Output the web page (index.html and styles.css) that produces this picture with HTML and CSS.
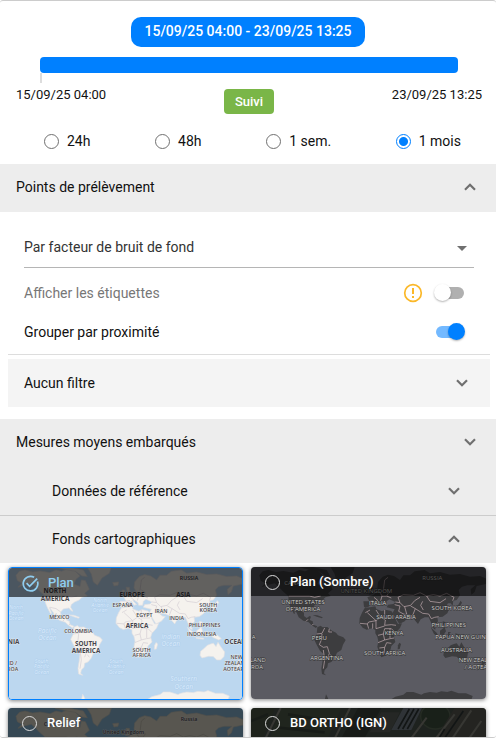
FILE: index.html
```html
<!DOCTYPE html>
<html lang="fr">
<head>
<meta charset="utf-8">
<meta name="viewport" content="width=device-width, initial-scale=1">
<title>Carte</title>
<link rel="stylesheet" href="styles.css">
</head>
<body>
<svg class="defs" aria-hidden="true">
  <defs>
    <symbol id="chevron" viewBox="0 0 12 8"><path d="M1 6.8 6 1.8l5 5" fill="none" stroke="currentColor" stroke-width="2.2"/></symbol>
    <g id="land">
      <path d="M48 46 58 34 75 30 98 36 120 33 150 38 168 30 185 34 200 28 222 30 240 48 228 58 222 72 240 80 244 60 256 62 268 88 254 100 262 108 246 112 238 120 224 126 214 134 212 142 219 154 213 152 207 144 190 147 182 156 182 168 190 174 199 168 203 170 199 180 208 184 210 194 222 199 218 204 205 196 196 187 180 182 166 172 160 158 148 142 155 160 152 162 142 143 136 128 135 108 120 95 106 80 94 70 76 74 54 82 66 70 52 62Z"/>
      <path d="M166 22 210 22 250 30 262 50 246 48 226 34 202 30Z"/>
      <path d="M262 22 334 22 328 40 306 54 292 76 280 66 274 42Z"/>
      <path d="M208 165 222 166 238 172 236 175 220 170Z"/>
      <path d="M222 202 232 197 238 202 252 201 266 212 278 218 284 226 300 232 307 240 299 254 294 270 281 278 274 294 264 306 254 310 252 322 244 330 242 340 248 346 236 342 234 326 238 300 240 282 230 272 220 254 212 238 220 222Z"/>
      <path d="M364 144 380 142 396 139 399 147 416 154 426 149 444 153 449 160 456 178 464 192 476 190 470 204 456 220 452 232 456 246 444 258 442 268 430 286 414 292 408 280 402 260 405 244 402 230 396 220 396 210 386 205 370 209 358 203 348 190 349 174 356 158Z"/>
      <path d="M468 248 473 252 469 267 463 268 464 256Z"/>
      <path d="M362 140 360 124 378 124 372 112 388 106 398 98 408 94 402 84 404 66 418 50 434 44 452 48 470 60 480 46 500 46 514 34 544 30 560 40 590 36 620 44 650 42 680 50 710 48 729 56 729 72 700 78 694 96 684 104 682 88 696 76 672 76 656 80 646 90 650 106 640 120 630 122 628 138 622 130 614 130 610 136 618 146 612 160 598 170 582 172 584 184 578 192 570 186 572 200 578 208 572 208 564 190 556 172 544 172 532 178 524 192 514 180 510 168 496 162 480 160 486 168 496 170 484 184 468 192 458 176 448 158 454 148 430 142 434 134 450 132 456 126 438 118 430 124 428 136 416 136 414 128 402 120 398 122 410 134 402 136 394 124 382 130 376 140 366 143Z"/>
      <path d="M378 82 388 82 390 102 376 104 382 96Z M366 90 374 90 373 100 366 100Z M338 68 356 66 354 76 342 78Z"/>
      <path d="M634 142 644 136 652 122 656 128 648 142 636 148Z M598 184 606 186 608 200 600 196Z"/>
      <path d="M562 202 580 218 586 230 572 222Z M590 212 604 202 608 214 600 226 590 222Z M588 232 612 235 610 238 588 235Z M614 216 624 216 618 220 622 230 614 228Z M636 220 650 224 664 236 656 240 638 232Z"/>
      <path d="M602 274 612 266 622 256 632 252 640 250 648 260 654 247 662 260 674 276 672 290 662 300 650 300 640 290 626 289 606 294 600 286Z"/>
      <path d="M248 403 252 410 256 420 244 420Z M440 420 456 410 480 404 490 396 510 396 534 404 542 400 560 396 580 398 594 394 612 396 624 392 646 400 668 400 688 408 684 420Z"/>
      <path d="M716 300 726 308 712 324 700 332 714 316Z"/>
    </g>
    <g id="borders" fill="none">
      <path d="M136 108H198L214 112 232 108M150 142 168 146 182 156M188 184 194 178M206 196 210 192M220 222 236 220 244 204M236 222 234 240 228 254 240 262 252 260 258 280 254 292M240 270 244 300 240 326M262 284 268 292M258 206 256 216 266 216"/>
      <path d="M366 158 380 150M372 158 398 182 412 172 398 150M424 150V174H450M412 172 426 180 424 196 444 194 458 196M398 182 376 186 372 192 350 190M372 192 376 206M388 190 388 206M398 182 398 206 424 198M404 226 420 222 424 206 444 206 456 218M420 222 424 240 404 248M424 240 440 236 452 234M408 264 424 262 430 248 444 250M424 262 422 280M440 206V234"/>
      <path d="M378 124 390 122M392 112 404 122M408 94 416 108 430 108 436 98 424 90M416 108 412 122M430 108 444 114M420 92 424 60 434 52M456 126 470 128 464 112 480 104 510 106 530 98 550 108 570 104 590 108 610 100 632 112 628 122M550 108 560 124 590 128 608 116M470 128 482 140 502 136 514 122 530 112M454 134 470 138 466 154 484 164M484 140 490 162M502 138 516 146 508 166M516 146 538 160 556 162M556 162 564 176 574 172 586 170M538 124 532 136 540 150"/>
    </g>
  </defs>
</svg>

<main class="panel">
  <section class="period" aria-label="Période">
    <strong class="period-range">15/09/25 04:00 - 23/09/25 13:25</strong>
    <div class="timeline"><div class="timeline-bar"></div><div class="timeline-tick"></div></div>
    <div class="bounds">
      <span>15/09/25 04:00</span>
      <button type="button" class="follow">Suivi</button>
      <span class="bound-end">23/09/25 13:25</span>
    </div>
    <div class="durations">
      <label><input class="radio" type="radio" name="duration">24h</label>
      <label><input class="radio" type="radio" name="duration">48h</label>
      <label><input class="radio" type="radio" name="duration">1 sem.</label>
      <label><input class="radio" type="radio" name="duration" checked>1 mois</label>
    </div>
  </section>

  <button type="button" class="bar" aria-expanded="true">Points de prélèvement<svg class="chevron"><use href="#chevron"/></svg></button>
  <section class="points">
    <div class="select-field">
      <select aria-label="Affichage"><option>Par facteur de bruit de fond</option></select>
      <svg class="caret" viewBox="0 0 10 5"><path d="M0 0h10L5 5z" fill="currentColor"/></svg>
    </div>
    <div class="option option-disabled">
      <label for="tags">Afficher les étiquettes</label>
      <svg class="warning" viewBox="0 0 20 20"><circle cx="10" cy="10" r="8.3" fill="none" stroke="currentColor" stroke-width="1.7"/><path d="M10 5v6M10 13v2" stroke="currentColor" stroke-width="2"/></svg>
      <input class="switch" id="tags" type="checkbox" role="switch" disabled>
    </div>
    <div class="option">
      <label for="group">Grouper par proximité</label>
      <input class="switch" id="group" type="checkbox" role="switch" checked>
    </div>
  </section>
  <section class="filters">
    <button type="button" class="bar bar-light" aria-expanded="false">Aucun filtre<svg class="chevron"><use href="#chevron"/></svg></button>
  </section>
  <button type="button" class="bar" aria-expanded="false">Mesures moyens embarqués<svg class="chevron"><use href="#chevron"/></svg></button>
  <button type="button" class="bar bar-nested" aria-expanded="false">Données de référence<svg class="chevron"><use href="#chevron"/></svg></button>
  <button type="button" class="bar bar-nested bar-last" aria-expanded="true">Fonds cartographiques<svg class="chevron"><use href="#chevron"/></svg></button>

  <section class="maps">
    <label class="card card-selected">
      <svg class="art" viewBox="27 24 699 393" preserveAspectRatio="xMidYMid slice" aria-hidden="true">
        <rect x="0" y="0" width="760" height="440" fill="#bcd7ef"/>
        <use href="#land" fill="#f5f2ee" stroke="#e3e1e2" stroke-width="2"/>
        <use href="#borders" stroke="#d3cdd3" stroke-width="2"/>
        <g class="ocean">
          <text x="48" y="148">North</text><text x="48" y="165">Pacific</text><text x="48" y="181">Ocean</text>
          <text x="300" y="125">North</text><text x="300" y="141">Atlantic</text><text x="300" y="157">Ocean</text>
          <text x="125" y="308">South</text><text x="125" y="325">Pacific</text><text x="125" y="341">Ocean</text>
          <text x="348" y="308">South</text><text x="348" y="325">Atlantic</text><text x="348" y="341">Ocean</text>
        </g>
        <g class="ocean ocean-big">
          <text x="142" y="218">Pacific</text><text x="142" y="241">Ocean</text>
          <text x="512" y="236">Indian</text><text x="512" y="258">Ocean</text>
          <text x="551" y="362">Southern</text><text x="551" y="386">Ocean</text>
        </g>
        <g class="place">
          <text x="567" y="60">RUSSIA</text><text x="368" y="142">ESPAÑA</text><text x="433" y="172">EGYPT</text><text x="483" y="158">IRAN</text><text x="530" y="181">INDIA</text>
          <text x="625" y="140">SOUTH</text><text x="625" y="157">KOREA</text><text x="614" y="200">PHILIPPINES</text><text x="605" y="229">INDONESIA</text>
          <text x="178" y="178">MÉXICO</text><text x="235" y="218">COLOMBIA</text><text x="425" y="275">SOUTH</text><text x="425" y="291">AFRICA</text>
          <text x="710" y="296">NEW</text><text x="710" y="314">ZEALAND</text><text x="712" y="332">AOTEAROA</text><text x="34" y="314">ND /</text><text x="38" y="332">ROA</text>
        </g>
        <g class="place place-big">
          <text x="165" y="100">NORTH</text><text x="165" y="123">AMERICA</text><text x="396" y="111">EUROPE</text><text x="550" y="111">ASIA</text><text x="411" y="205">AFRICA</text>
          <text x="258" y="257">SOUTH</text><text x="258" y="280">AMERICA</text><text x="41" y="252">NIA</text><text x="716" y="252">OCEANIA</text>
        </g>
      </svg>
      <span class="card-head"><input class="radio" type="radio" name="map" checked><svg class="tick" viewBox="0 0 17 17"><path d="M15.5 6.5a7.3 7.3 0 1 1-3.4-4.2M4.6 8.2l3 3.1 7.6-7.7" fill="none" stroke="currentColor" stroke-width="1.7"/></svg><span class="card-name">Plan</span></span>
    </label>

    <label class="card">
      <svg class="art" viewBox="9 21 705 396" preserveAspectRatio="xMidYMid slice" aria-hidden="true">
        <rect x="0" y="0" width="760" height="440" fill="#5b5b62"/>
        <g transform="translate(-14 0)"><use href="#land" fill="#3d3d3f"/><use href="#borders" stroke="#c4aeb2" stroke-width="2"/></g>
        <g class="place place-dark">
          <text x="145" y="76">CANADA</text><text x="553" y="60">RUSSIA</text><text x="355" y="99">UNITED KINGDOM</text><text x="165" y="131">UNITED STATES</text><text x="165" y="152">OF AMERICA</text>
          <text x="389" y="135">ITALIA</text><text x="444" y="176">SAUDI ARABIA</text><text x="612" y="150">SOUTH KOREA</text><text x="602" y="202">PHILIPPINES</text>
          <text x="438" y="225">KENYA</text><text x="214" y="240">PERU</text><text x="236" y="300">ARGENTINA</text><text x="410" y="286">SOUTH AFRICA</text>
          <text x="648" y="238">PAPUA NEW GUINEA</text><text x="625" y="277">AUSTRALIA</text><text x="694" y="306">NEW ZEALAND</text><text x="702" y="326">/ AOTEAROA</text>
          <text x="17" y="238">A</text><text x="30" y="306">LAND</text><text x="27" y="326">ROA</text>
        </g>
      </svg>
      <span class="card-head"><input class="radio" type="radio" name="map"><span class="card-name">Plan (Sombre)</span></span>
    </label>

    <label class="card">
      <svg class="art" viewBox="24 21 705 396" preserveAspectRatio="xMidYMid slice" aria-hidden="true">
        <rect x="0" y="0" width="760" height="440" fill="#87b3d2"/>
        <use href="#land" fill="#dcd8c8" stroke="#c5c4ba" stroke-width="2"/>
        <use href="#borders" stroke="#b5b0a4" stroke-width="2"/>
        <g class="place"><text x="567" y="60">Russia</text><text x="370" y="99">United Kingdom</text><text x="160" y="75">Canada</text></g>
      </svg>
      <span class="card-head"><input class="radio" type="radio" name="map"><span class="card-name">Relief</span></span>
    </label>

    <label class="card">
      <svg class="art" viewBox="9 21 705 396" preserveAspectRatio="xMidYMid slice" aria-hidden="true">
        <rect x="0" y="0" width="760" height="440" fill="#4d564e"/>
        <path d="M0 21h80L46 110H0z" fill="#4c5545"/><path d="M100 21h180l-40 90H66z" fill="#515c4c"/>
        <path d="M330 21h70l-50 90h-70z" fill="#3c453e"/><path d="M400 34h55l-30 60h-60z" fill="#5d625e"/><path d="M466 21h56l-32 66h-60z" fill="#77808a"/>
        <ellipse cx="562" cy="46" rx="44" ry="38" fill="#405040" stroke="#5c6c58" stroke-width="4"/>
        <path d="M620 21h94v96H560z" fill="#5a5b54"/>
        <path d="M98 21 50 117M306 21l-48 96M536 50l-50 67M620 40l-60 77M670 28l-60 89M700 60l-40 57" fill="none" stroke="#8a8a80" stroke-width="6"/>
        <path d="M484 24l-34 60M498 24l-34 60M512 24l-34 60M646 30l-60 87M590 84l-20 33" fill="none" stroke="#2e3636" stroke-width="5"/>
        <path d="M9 60 60 40M120 40l130 20M90 80l140 14" stroke="#3e483c" stroke-width="8"/>
      </svg>
      <span class="card-head"><input class="radio" type="radio" name="map"><span class="card-name">BD ORTHO (IGN)</span></span>
    </label>
  </section>
</main>
</body>
</html>
```
FILE: styles.css
```css
* { box-sizing: border-box; }

body {
  margin: 0;
  background: #fff;
  color: #111;
  font: 14px/20px Roboto, "Liberation Sans", sans-serif;
}

button, select { font: inherit; color: inherit; }
input { margin: 0; flex: none; }
.defs { position: absolute; width: 0; height: 0; }

.panel {
  display: flex;
  flex-direction: column;
  height: 100vh;
  overflow: hidden;
  border: solid #ccc;
  border-width: 1px 0;
  border-radius: 3px;
}
.panel > * { flex: none; }

/* Period */
.period { display: flex; flex-direction: column; padding-top: 16px; }
.period-range {
  align-self: center;
  padding: 4px 13px 6px;
  border-radius: 10px;
  background: #0080ff;
  color: #fff;
  font-weight: 500;
}
.timeline { margin: 10px 38px 0 40px; }
.timeline-bar { height: 16px; border-radius: 4px; background: #0080ff; }
.timeline-tick { width: 2px; height: 10px; background: #ddd; }
.bounds {
  display: grid;
  grid-template-columns: 1fr auto 1fr;
  align-items: start;
  padding: 2px 14px 0 16px;
  font-size: 13px;
}
.bound-end { text-align: right; }
.follow {
  margin-top: 4px;
  padding: 3px 11px 2px;
  border: 0;
  border-radius: 4px;
  background: #7ab648;
  color: #fff;
  font-weight: 500;
}
.durations { display: flex; justify-content: space-between; padding: 17px 35px 13px 44px; }
.durations label { display: flex; align-items: center; gap: 8px; }

.radio {
  appearance: none;
  width: 15px;
  height: 15px;
  border: 1px solid #707070;
  border-radius: 50%;
}
.radio:checked {
  border-color: #0080ff;
  background: radial-gradient(#0080ff 4px, transparent 5px);
}

/* Accordion bars */
.bar {
  display: flex;
  align-items: center;
  justify-content: space-between;
  width: 100%;
  height: 48px;
  padding: 0 20px 2px 16px;
  border: 0;
  background: #ededed;
  text-align: left;
}
.bar-nested { padding: 0 36px 0 52px; }
.bar-last { padding-bottom: 2px; border-top: 1px solid #ccc; }
.chevron { width: 12px; height: 8px; color: #707070; }
[aria-expanded="false"] .chevron { transform: scaleY(-1); }

/* Points */
.points { padding: 16px 16px 0 24px; }
.select-field { position: relative; margin-right: 6px; }
.select-field select {
  display: block;
  width: 100%;
  height: 40px;
  padding: 0 0 2px;
  border: 0;
  border-bottom: 1px solid #b5b5b5;
  background: transparent;
  appearance: none;
  color: #333;
}
.caret { position: absolute; right: 7px; top: 18px; width: 10px; height: 5px; color: #707070; }
.option { display: flex; align-items: center; height: 39px; padding-right: 16px; }
.option:nth-child(2) { margin-top: 5px; }
.option label { flex: 1; }
.option-disabled label { color: #777; }
.warning { width: 20px; height: 20px; margin-right: 13px; color: #fbb829; }
.switch {
  appearance: none;
  display: flex;
  align-items: center;
  width: 28px;
  height: 12px;
  border-radius: 6px;
  background: #b0b0b0;
}
.switch::before {
  content: "";
  width: 17px;
  height: 17px;
  flex: none;
  margin-left: -2px;
  border-radius: 50%;
  background: #fff;
  box-shadow: 0 1px 2px rgba(0, 0, 0, .3);
}
.switch:checked { background: #73b9ff; justify-content: flex-end; }
.switch:checked::before { background: #0080ff; margin-right: -1px; }

.filters { margin: 3px 6px 12px 8px; padding-top: 4px; border-top: 1px solid #ddd; }
.bar-light { padding: 0 22px 0 16px; background: #f4f4f4; }

/* Base maps */
.maps {
  display: grid;
  grid-template-columns: 1fr 1fr;
  gap: 8px;
  align-items: start;
  padding: 4px 10px 8px 8px;
}
.card {
  display: block;
  position: relative;
  overflow: hidden;
  border-radius: 4px;
  box-shadow: 0 1px 4px rgba(0, 0, 0, .5);
}
.card-selected { border: 1px solid #0080ff; }
.art { display: block; width: 100%; aspect-ratio: 235 / 132; }
.card-head {
  position: absolute;
  top: 0;
  left: 0;
  right: 0;
  display: flex;
  align-items: center;
  gap: 10px;
  height: 29px;
  padding: 2px 14px 0;
  background: rgba(0, 0, 0, .6);
  color: #fff;
  font-size: 13px;
  font-weight: 500;
}
.card-head .radio { border-color: #ddd; }
.card-name { padding-bottom: 1px; }
.card-selected .card-head { gap: 9px; padding-left: 13px; color: #8fcdf0; }
.card-selected .radio { position: absolute; opacity: 0; }
.tick { flex: none; width: 17px; height: 17px; }

.place, .ocean { font-family: "Open Sans", sans-serif; text-anchor: middle; paint-order: stroke; }
.place { font-size: 16px; font-weight: 600; fill: #45454d; stroke: #f5f2ee; stroke-width: 2px; }
.place-big { font-size: 19px; font-weight: 700; }
.place-dark { font-size: 18px; font-weight: 400; fill: #cfcfcf; stroke: #333; stroke-width: 3px; }
.ocean { font-size: 16px; font-style: italic; fill: #dfeefb; stroke: #a9cbed; stroke-width: 2px; }
.ocean-big { font-size: 20px; }
```
